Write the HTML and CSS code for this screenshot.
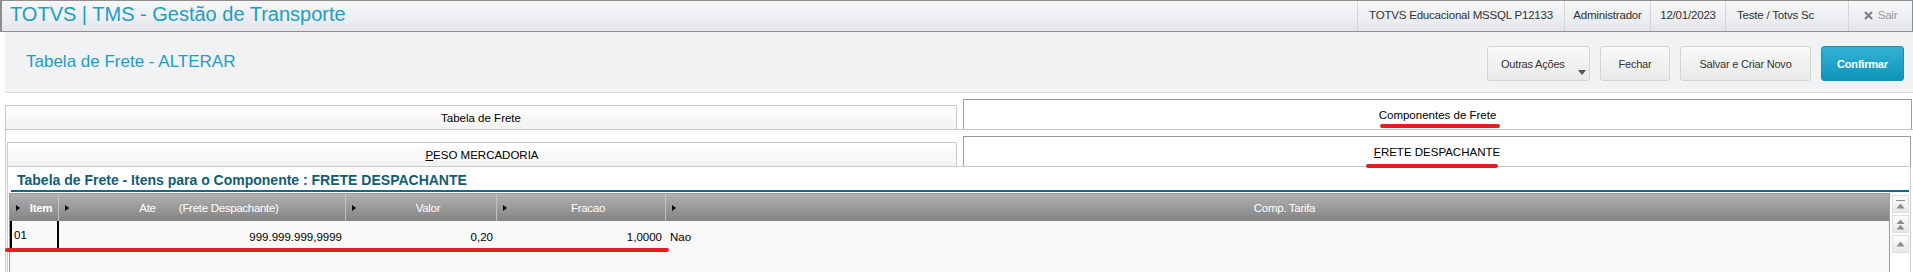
FILE: index.html
```html
<!DOCTYPE html>
<html lang="pt-BR">
<head>
<meta charset="utf-8">
<title>TOTVS | TMS - Gestão de Transporte</title>
<link rel="stylesheet" href="styles.css">
</head>
<body>
<header class="topbar">
  <div class="app-title">TOTVS | TMS - Gestão de Transporte</div>
  <div class="info">
    <div class="seg seg-env">TOTVS Educacional MSSQL P12133</div>
    <div class="seg seg-user">Administrador</div>
    <div class="seg seg-date">12/01/2023</div>
    <div class="seg seg-branch">Teste / Totvs Sc</div>
    <div class="seg seg-exit"><svg class="x-icon" width="9" height="9" viewBox="0 0 9 9"><path d="M1 1L8 8M8 1L1 8" stroke="#7a7a7a" stroke-width="2"/></svg> Sair</div>
  </div>
</header>

<div class="actionbar">
  <div class="page-title">Tabela de Frete - ALTERAR</div>
  <div class="buttons">
    <button class="btn btn-more">Outras Ações<span class="caret"></span></button>
    <button class="btn btn-close">Fechar</button>
    <button class="btn btn-save">Salvar e Criar Novo</button>
    <button class="btn btn-ok">Confirmar</button>
  </div>
</div>

<div class="folders">
  <div class="tabrow tabrow-1">
    <div class="tab tab-l1">Tabela de Frete</div>
    <div class="tab tab-active tab-r1">Componentes de Frete</div>
  </div>
  <div class="frame">
    <div class="tabrow tabrow-2">
      <div class="tab tab-l2"><span class="acc">P</span>ESO MERCADORIA</div>
      <div class="tab tab-active tab-r2"><span class="acc">F</span>RETE DESPACHANTE</div>
    </div>
    <div class="panel">
      <div class="grid-title">Tabela de Frete - Itens para o Componente : FRETE DESPACHANTE</div>
      <div class="teal-line"></div>
      <div class="grid-wrap">
        <div class="grid">
          <div class="grid-head">
            <div class="hcell hcell-focus"><span class="arrow"></span><span class="hlabel">Item</span></div>
            <div class="hcell"><span class="arrow"></span><span class="hlabel">Ate        (Frete Despachante)</span></div>
            <div class="hcell"><span class="arrow"></span><span class="hlabel">Valor</span></div>
            <div class="hcell"><span class="arrow"></span><span class="hlabel">Fracao</span></div>
            <div class="hcell hcell-last"><span class="arrow"></span><span class="hlabel">Comp. Tarifa</span></div>
          </div>
          <div class="grid-body">
            <div class="grid-row">
              <div class="cell cell-focus">01</div>
              <div class="cell num">999.999.999,9999</div>
              <div class="cell num">0,20</div>
              <div class="cell num">1,0000</div>
              <div class="cell">Nao</div>
            </div>
          </div>
        </div>
        <div class="scroll">
          <div class="sbtn"><svg width="9" height="9" viewBox="0 0 9 9"><rect x="0" y="0" width="9" height="1" fill="#8c8c8c"/><path d="M0.5 8.5L4.5 3.5L8.5 8.5Z" fill="#8c8c8c"/></svg></div>
          <div class="sbtn"><svg width="9" height="11" viewBox="0 0 9 11"><path d="M0.5 5L4.5 0.5L8.5 5Z M0.5 10.5L4.5 6L8.5 10.5Z" fill="#8c8c8c"/></svg></div>
          <div class="sbtn"><svg width="9" height="6" viewBox="0 0 9 6"><path d="M0.5 5.5L4.5 0.5L8.5 5.5Z" fill="#8c8c8c"/></svg></div>
        </div>
      </div>
    </div>
  </div>
</div>

<div class="mark mark-1"></div>
<div class="mark mark-2"></div>
<div class="mark mark-3"></div>
</body>
</html>
```

FILE: styles.css
```css
* { box-sizing: border-box; }
html, body { margin: 0; padding: 0; height: 272px; overflow: hidden; background: #fff; }
body { font-family: "Liberation Sans", Arial, sans-serif; color: #000; position: relative; }

/* top bar */
.topbar {
  display: flex;
  height: 32px;
  border: 1px solid #8e8e8e;
  border-left-width: 2px;
  background: linear-gradient(#f6f7f9, #e4e7ea);
}
.app-title {
  flex: 1;
  font-size: 20px;
  line-height: 27px;
  color: #1b9ec8;
  padding-left: 8px;
  white-space: nowrap;
}
.info { display: flex; }
.seg {
  border-left: 1px solid #d3d6da;
  font-size: 11.5px;
  letter-spacing: -0.2px;
  color: #333;
  line-height: 29px;
  text-align: center;
  white-space: nowrap;
}
.seg-env { width: 207px; }
.seg-user { width: 86px; }
.seg-date { width: 75px; }
.seg-branch { width: 123px; text-align: left; padding-left: 11px; }
.seg-exit { width: 64px; color: #9a9a9a; }
.x-icon { vertical-align: -0.5px; margin-right: 2px; }

/* action bar */
.actionbar {
  margin-left: 5px;
  height: 61px;
  background: #f1f2f3;
  border-bottom: 1px solid #dcdcdc;
  display: flex;
  align-items: center;
  justify-content: space-between;
  padding: 0 9px 0 21px;
}
.page-title { font-size: 17px; color: #1b9ec8; margin-top: -1px; }
.buttons { display: flex; gap: 10px; margin-top: 3px; }
.btn {
  height: 35px;
  border: 1px solid #d4d4d4;
  border-radius: 3px;
  background: linear-gradient(#f9f9f9, #e9e9e9);
  font-family: "Liberation Sans", Arial, sans-serif;
  font-size: 11px;
  letter-spacing: -0.2px;
  color: #333;
  padding: 0;
  text-align: center;
}
.btn-more { width: 103px; position: relative; text-align: left; padding-left: 13px; }
.caret {
  position: absolute;
  right: 3px;
  bottom: 5px;
  width: 0; height: 0;
  border-top: 5px solid #555;
  border-left: 4.5px solid transparent;
  border-right: 4.5px solid transparent;
}
.btn-close { width: 70px; }
.btn-save { width: 131px; }
.btn-ok {
  width: 83px;
  background: linear-gradient(#33b2d4, #0e94ba);
  border-color: #1a8fb3;
  color: #fff;
  font-weight: bold;
}

/* folders */
.folders { margin: 6px 0 0 5px; }
.tabrow { display: flex; align-items: flex-end; gap: 6px; height: 31px; border-bottom: 1px solid #c9c9c9; }
.tab {
  font-size: 11.5px;
  text-align: center;
  color: #000;
}
.tab-l1, .tab-l2 {
  height: 24px;
  line-height: 25px;
  border: 1px solid #cbcbcb;
  border-bottom: none;
  background: linear-gradient(#ffffff, #f2f2f2);
}
.tab-active {
  height: 30px;
  line-height: 31px;
  border: 1px solid #9c9c9c;
  border-bottom: none;
  background: #fff;
}
.tab-l1 { width: 952px; }
.tab-r1 { width: 949px; }
.tab-l2 { width: 950px; }
.tab-r2 { width: 948px; }
.acc { text-decoration: underline; }

.frame { border-left: 1px solid #cbcbcb; padding: 6px 2px 0 1px; }
.panel { border-left: 1px solid #cbcbcb; border-right: 1px solid #cbcbcb; }
.grid-title {
  height: 23px;
  padding: 3px 0 0 9px;
  font-size: 14px;
  line-height: 20px;
  font-weight: bold;
  color: #0f5d75;
  white-space: nowrap;
}
.teal-line { height: 2px; background: #146a83; margin: 0 1px 1px 3px; }

.grid-wrap { display: flex; padding-left: 1px; }
.grid { flex: 1; border: 1px solid #9a9a9a; border-bottom: none; }
.grid-head, .grid-row {
  display: grid;
  grid-template-columns: 49px 287px 151px 169px 1fr;
}
.grid-head { height: 27px; background: linear-gradient(#b1b1b1, #838383); }
.hcell {
  display: flex;
  align-items: center;
  padding-left: 6px;
  border-right: 1px solid #c2c2c2;
  font-size: 11.5px;
  letter-spacing: -0.3px;
  color: #fff;
  white-space: pre;
}
.hcell-last { border-right: none; }
.hcell-focus .hlabel { font-weight: bold; }
.arrow {
  width: 0; height: 0;
  border-left: 4px solid #000;
  border-top: 3.5px solid transparent;
  border-bottom: 3.5px solid transparent;
  margin-right: 4px;
}
.hlabel { flex: 1; text-align: center; }

.grid-body { height: 80px; background: #f8f8f8; }
.grid-row { height: 29px; }
.cell {
  padding: 2px 4px 0;
  font-size: 11.5px;
  line-height: 28px;
  white-space: nowrap;
}
.num { text-align: right; padding-right: 4px; }
.cell-focus { border: 2px solid #000; border-top: none; line-height: 25px; padding-left: 2px; }

.scroll { width: 20px; padding: 2px 0 0 2px; display: flex; flex-direction: column; gap: 2px; height: 90px; }
.sbtn {
  width: 17px; height: 18px;
  border: 1px solid #dedede;
  background: linear-gradient(#fdfdfd, #e8e8e8);
  display: flex; align-items: center; justify-content: center;
}

/* red annotation marks */
.mark { position: absolute; height: 4px; background: #e31e24; border-radius: 2px; }
.mark-1 { left: 1380px; top: 124px; width: 120px; }
.mark-2 { left: 1366px; top: 164px; width: 132px; }
.mark-3 { left: 5px; top: 248px; width: 664px; }
```
